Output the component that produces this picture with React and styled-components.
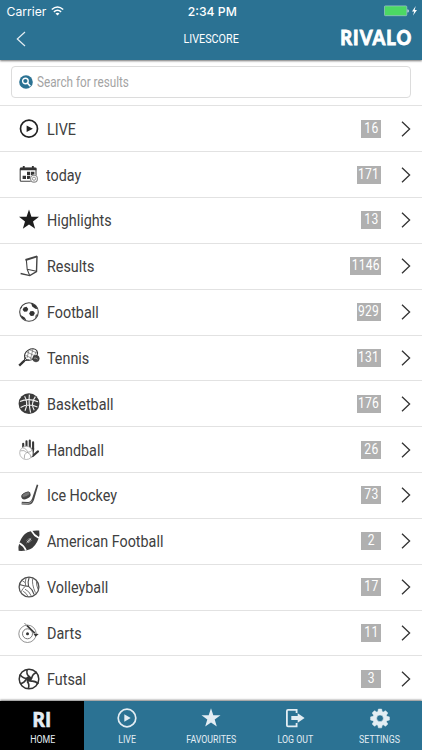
import styled, { createGlobalStyle } from "styled-components";

const GlobalStyle = createGlobalStyle`
    * {
        box-sizing: border-box;
    }
    body {
        margin: 0;
        background: #fff;
        overflow: hidden;
        font-family: "Roboto", sans-serif;
        color: #404040;
    }
`;

const categories = [
    { name: "LIVE", count: 16, icon: "live" },
    { name: "today", count: 171, icon: "today" },
    { name: "Highlights", count: 13, icon: "highlights" },
    { name: "Results", count: 1146, icon: "results" },
    { name: "Football", count: 929, icon: "football" },
    { name: "Tennis", count: 131, icon: "tennis" },
    { name: "Basketball", count: 176, icon: "basketball" },
    { name: "Handball", count: 26, icon: "handball" },
    { name: "Ice Hockey", count: 73, icon: "hockey" },
    { name: "American Football", count: 2, icon: "american" },
    { name: "Volleyball", count: 17, icon: "volleyball" },
    { name: "Darts", count: 11, icon: "darts" },
    { name: "Futsal", count: 3, icon: "futsal" },
];

const STAR = "M12 1.6l2.45 7.15 7.55.1-6 4.6 2.15 7.3L12 16.4l-6.15 4.35L8 13.45 2 8.85l7.55-.1z";

const icons = {
    live: (
        <>
            <circle cx="12" cy="11.7" r="8.5" fill="none" stroke="#222" strokeWidth="1.7" />
            <path d="M9.6 8.4v6.6l6.3-3.3z" fill="#222" />
        </>
    ),
    today: (
        <>
            <rect x="3.2" y="5" width="15.8" height="13.3" rx="1" fill="none" stroke="#444" strokeWidth="1.1" />
            <path d="M3 4.8h16.4v2.4H3zM5.8 3h1.9v3H5.8zM14.9 3h1.9v3h-1.9zM10 8.7h3.2v3.2H10zM14 8.7h3.4v3.2H14zM5.6 12.8h3.4V16H5.6zM10 12.8h3.2V16H10z" fill="#333" />
            <circle cx="17" cy="15.7" r="4.3" fill="#fff" />
            <circle cx="17" cy="15.7" r="3.4" fill="none" stroke="#888" strokeWidth="1.1" />
            <circle cx="17" cy="15.7" r="1.6" fill="none" stroke="#888" strokeWidth=".9" />
        </>
    ),
    highlights: <path d={STAR} fill="#1d1d1d" />,
    results: (
        <g fill="none" stroke="#444">
            <path d="M8.5 6L20.2 2.4" strokeWidth="2" />
            <path d="M20 2.2l-.5 15.4-6.7 4-9.2-2.1" strokeWidth="1.4" />
            <path d="M9.3 5.5l.9 9.8 2.5 6.3M10.2 15.2l9.3 2" strokeWidth="1.1" />
        </g>
    ),
    football: (
        <>
            <circle cx="12" cy="12" r="9.3" fill="none" stroke="#444" strokeWidth="1.1" />
            <path d="M6.8 7.4l2.7-.6 1.8 2.2-1.2 2.5-2.8.2-1.7-2zM13.3 11.2l2.9-.3 1.7 2.2-1.3 2.7-2.8.3-1.7-2.3z" fill="#333" />
            <path d="M14 3l4.8 2.4 1.6 3.5-2-.1-3.2-2.4zM4 15.2l3.7 2.2 1.8 3.2-4.5-2.4zM18.8 14.9l1.7-.8-2.5 4.6zM3.4 8.8L5 6.2l-.2 1.9z" fill="#333" />
        </>
    ),
    tennis: (
        <g fill="none" stroke="#333">
            <ellipse cx="14" cy="8.5" rx="7" ry="5.2" transform="rotate(-32 14 8.5)" strokeWidth="1" />
            <path d="M8 9l8 4M10 6l8 4M13 4l7 3M12 4l-2 8M16 3l-2.5 10M19.5 5L16 13" stroke="#555" strokeWidth=".6" />
            <path d="M2.2 19.6l5.2-5" strokeWidth="2.3" />
            <path d="M7.2 14.8l1.1-4M7.2 14.8l5-.9" strokeWidth="1" />
            <circle cx="19" cy="12.6" r="3.3" fill="#444" strokeWidth=".5" />
            <path d="M16.9 12.2q2.1-.8 3.8 1" stroke="#bbb" strokeWidth=".7" />
        </g>
    ),
    basketball: (
        <>
            <circle cx="12" cy="11.7" r="10.4" fill="#3b3b3b" />
            <path d="M3 9.6Q11 5.4 21 9.8M3.6 15.4q8.1-4.6 16.8-.4M7.6 4.2q4 6.3.4 14.6M12.4 2.6q-1 8 1.2 18M18.4 4.6q-5.1 7-1.2 13.6" fill="none" stroke="#f2f2f2" strokeWidth="1.15" />
        </>
    ),
    handball: (
        <>
            <path d="M6.2 10V5.7M9.5 9V3.3M12.8 10V2.5M16.1 12V4.4M15.8 18l5.2-4.6" stroke="#383838" strokeWidth="2.1" strokeLinecap="round" />
            <path d="M10.5 9.5l6.6.5-.3 6.4-2 3.5z" fill="#383838" />
            <circle cx="9.3" cy="14.9" r="6.6" fill="#fff" stroke="#aaa" strokeWidth=".8" />
            <path d="M3.4 12.8q4-1.3 6.3 1.8M5.2 9.8q4.5.2 5.5 5M9.7 14.6q-3 1.5-2.4 6M9.7 14.6q4-.4 6-2.8M10.7 14.7q3.5 1.3 3.1 4.7" fill="none" stroke="#999" strokeWidth=".75" />
        </>
    ),
    hockey: (
        <>
            <path d="M19.8 1.4l1.5.5-4.1 14.3q-1.4 5-5.3 5.5l-7.3-.2.2-2.7 6.4.2q2.8-.2 4-3.7z" fill="#484848" />
            <path d="M5 20.3l6 .2q2.8-.1 4-3" fill="none" stroke="#aaa" strokeWidth=".8" />
            <ellipse cx="9" cy="12.8" rx="4.9" ry="3" transform="rotate(-25 9 12.8)" fill="#444" />
            <ellipse cx="8.9" cy="11.6" rx="4.4" ry="2" transform="rotate(-25 8.9 11.6)" fill="#777" stroke="#444" strokeWidth=".7" />
        </>
    ),
    american: (
        <>
            <path d="M1.6 21.8q-.6-4 .7-7.7Q5 6 10.5 3.2 15 1 22.2 1.5q.8 4.2-.6 8Q18.6 17.6 13 20.3q-4.3 2-11.4 1.5z" fill="#3b3b3b" />
            <path d="M2.2 14q4.7 2.5 6.8 7.5M14.5 1.8q2.5 4.7 7.4 7.3" fill="none" stroke="#fff" strokeWidth="1.7" />
            <path d="M9.6 13.8l4.6-4.4M9.9 11.6l2 2.1M11 10.5l2 2.2M12.1 9.4l2 2.2" stroke="#e8e8e8" strokeWidth=".9" />
        </>
    ),
    volleyball: (
        <g fill="none" stroke="#666" strokeWidth=".9">
            <circle cx="12" cy="12" r="9.9" stroke="#505050" strokeWidth="1.3" />
            <path d="M11.6 11.4q-1.2-4.6.6-9.2M11.6 11.4q-4.8-.4-9-1.9M11.6 11.4q4 3 5.4 8" stroke="#505050" strokeWidth="1.1" />
            <path d="M8.6 10.9q-.8-3.5.4-8M5.2 5.6l3.2 2.2M15.8 3.2q-1.4 5.3 2.6 14.5M19.4 6.2q-.2 3.5 1.6 8M8.5 11.3q-3 1.8-4.3 5.5M8 14.2q4.2 1.8 6.3 6.8M6.2 16.3q3.2 1.6 4.8 5.2" />
        </g>
    ),
    darts: (
        <g fill="none" stroke="#777">
            <circle cx="10.5" cy="12.8" r="8.7" strokeWidth=".8" />
            <circle cx="10.5" cy="12.8" r="5" strokeWidth="1" />
            <circle cx="10.5" cy="12.8" r="1.5" fill="#333" stroke="none" />
            <path d="M7.4 2l4 4" strokeWidth=".9" />
            <path d="M10 4.7l7.7 7.3" stroke="#333" strokeWidth="1.6" />
            <path d="M16.3 12.5l5.4.5-3.2 2.8z" fill="#333" stroke="none" />
        </g>
    ),
    futsal: (
        <>
            <circle cx="12" cy="12" r="9.8" fill="none" stroke="#333" strokeWidth="1.5" />
            <path d="M12 8.6l3.3 2.3-1.2 3.9H9.9l-1.2-3.9z" fill="#333" />
            <path d="M12 9.4Q9 7 10.2 2.2M14.6 11.3q.8-4.5 5.4-6.1M13.6 14.3q4.8-.8 7.7 2.8M10.2 14.4q2.7 3 1 7.4M9.3 11.3q-1.1 4.5-6.1 5.5M9.2 11.5Q5 11 3 7.4" fill="none" stroke="#333" strokeWidth="1.6" />
        </>
    ),
};

const tabs = [
    { label: "HOME", active: true },
    { label: "LIVE", icon: <><circle cx="12" cy="12" r="8.8" fill="none" stroke="currentColor" strokeWidth="1.7" /><path d="M9.3 8.3v7.4l6.4-3.7z" /></> },
    { label: "FAVOURITES", icon: <path d="M12 2.3l2.3 6.9 7.2.1-5.8 4.3 2.1 7-5.8-4.2-5.8 4.2 2.1-7-5.8-4.3 7.2-.1z" /> },
    { label: "LOG OUT", icon: <><path d="M13.6 7V3.9H5q-1.1 0-1.1 1.1v14.2q0 1.1 1.1 1.1h8.6V17" fill="none" stroke="currentColor" strokeWidth="1.8" /><path d="M8.3 10h6.4V7.3l6.9 4.7-6.9 4.7V14H8.3z" /></> },
    { label: "SETTINGS", small: true, icon: <path fillRule="evenodd" stroke="currentColor" strokeWidth=".6" strokeLinejoin="round" d="M10.3 2.7h3.4l.6 2.7 1.2.5 2.4-1.5 2.4 2.4-1.5 2.4.5 1.2 2.7.6v3.4l-2.7.6-.5 1.2 1.5 2.4-2.4 2.4-2.4-1.5-1.2.5-.6 2.7h-3.4l-.6-2.7-1.2-.5-2.4 1.5-2.4-2.4 1.5-2.4-.5-1.2-2.7-.6v-3.4l2.7-.6.5-1.2-1.5-2.4 2.4-2.4 2.4 1.5 1.2-.5zM12 8.9a3.6 3.6 0 100 7.2 3.6 3.6 0 000-7.2z" /> },
];

const App = () => {
    return (
        <Page>
            <GlobalStyle />
            <Header>
                <StatusBar>
                    <Carrier>
                        Carrier
                        <svg width="13" height="10" viewBox="0 0 13 10" fill="none" stroke="#fff" strokeWidth="1.6">
                            <path d="M.8 3.5q5.7-5 11.4 0M2.9 5.8q3.6-3.1 7.2 0" />
                            <path d="M4.5 7.4q2-1.5 4 0l-2 2.1z" fill="#fff" stroke="none" />
                        </svg>
                    </Carrier>
                    <Clock>2:34 PM</Clock>
                    <Power>
                        <svg width="34" height="12" viewBox="0 0 34 12">
                            <rect x=".4" y=".9" width="22.4" height="9.8" rx="1" fill="#4cd964" stroke="#a5c7cf" strokeWidth=".7" />
                            <path d="M23.3 4.2q1.7.2 1.7 1.7t-1.7 1.7z" fill="#bad3dd" />
                            <path d="M31.7 1L28 6.4h2.2L29 10.5l4-5.5h-2.3z" fill="#fff" />
                        </svg>
                    </Power>
                </StatusBar>
                <NavBar>
                    <BackButton aria-label="Back">
                        <svg width="10" height="16" viewBox="0 0 10 16" fill="none" stroke="#e4edf2" strokeWidth="1.2">
                            <path d="M9 1L1.3 8 9 15" />
                        </svg>
                    </BackButton>
                    <Title $scale={0.81}>LIVESCORE</Title>
                    <Logo>RIVALO</Logo>
                </NavBar>
            </Header>
            <SearchArea>
                <SearchBox>
                    <svg width="14" height="14" viewBox="0 0 14 14">
                        <circle cx="7" cy="7" r="6.8" fill="#2b7293" />
                        <circle cx="6.4" cy="6" r="2.8" fill="none" stroke="#fff" strokeWidth="1.4" />
                        <path d="M8.3 8l3.1 3.2" stroke="#fff" strokeWidth="1.6" />
                    </svg>
                    <Placeholder $scale={0.85}>Search for results</Placeholder>
                </SearchBox>
            </SearchArea>
            <List>
                {categories.map((item) => (
                    <Row key={item.name}>
                        <RowIcon viewBox="0 0 24 24">{icons[item.icon]}</RowIcon>
                        <RowLabel $scale={0.825} $shift={item.name === "today"}>{item.name}</RowLabel>
                        <Badge $digits={String(item.count).length}>
                            <Count $scale={0.84}>{item.count}</Count>
                        </Badge>
                        <Chevron viewBox="0 0 10 16">
                            <path d="M1 .8L8.6 8 1 15.2" />
                        </Chevron>
                    </Row>
                ))}
            </List>
            <TabBar>
                {tabs.map((tab) => (
                    <Tab key={tab.label} $active={tab.active}>
                        {tab.icon ? <TabIcon viewBox={tab.small ? "-0.8 -0.6 25.6 25.6" : "0 0 24 24"}>{tab.icon}</TabIcon> : <TabLogo>RI</TabLogo>}
                        <TabLabel $scale={0.8}>{tab.label}</TabLabel>
                    </Tab>
                ))}
            </TabBar>
        </Page>
    );
};

const Page = styled.div`
    width: 422px;
    height: 750px;
    display: flex;
    flex-direction: column;
    overflow: hidden;
`;

const Header = styled.header`
    height: 60px;
    flex-shrink: 0;
    background: #2b7293;
    color: #fff;
    box-shadow: 0 1px 2px rgba(0, 0, 0, 0.55);
`;

const StatusBar = styled.div`
    height: 22px;
    display: grid;
    grid-template-columns: 1fr auto 1fr;
    align-items: center;
    padding: 0 4px 0 6.5px;
    font-family: "Inter", sans-serif;
    font-size: 12.2px;
`;

const Carrier = styled.div`
    display: flex;
    align-items: center;
    gap: 4.5px;
`;

const Clock = styled.div`
    font-weight: 500;
`;

const Power = styled.div`
    display: flex;
    justify-content: flex-end;
`;

const NavBar = styled.div`
    height: 33px;
    display: grid;
    grid-template-columns: 1fr auto 1fr;
    align-items: center;
    padding: 0 10px;
`;

const BackButton = styled.button`
    display: flex;
    padding: 0 0 0 6px;
    border: none;
    background: none;
`;

/* squeezed Roboto, stands in for the condensed cut */
const Narrow = styled.span`
    display: inline-block;
    white-space: nowrap;
    transform: scaleX(${(props) => props.$scale});
`;

const Title = styled(Narrow)`
    font-size: 13.3px;
`;

const Logo = styled.div`
    justify-self: end;
    padding-bottom: 3px;
    font-family: "Lato", sans-serif;
    font-weight: 900;
    font-size: 20px;
    letter-spacing: 1.2px;
    -webkit-text-stroke: 0.8px currentColor;
    transform: scaleX(0.91);
    transform-origin: right center;
`;

const SearchArea = styled.div`
    height: 46.4px;
    flex-shrink: 0;
    padding: 6px 11px 0;
    border-bottom: 1px solid #e2e2e2;
`;

const SearchBox = styled.div`
    height: 32px;
    display: flex;
    align-items: center;
    gap: 4px;
    padding-left: 7px;
    border: 1px solid #dcdcdc;
    border-radius: 4px;
`;

const Placeholder = styled(Narrow)`
    font-size: 13.8px;
    color: #a3a3a3;
    transform-origin: left center;
`;

const List = styled.div`
    flex: 1;
    min-height: 0;
    overflow: hidden;
`;

const Row = styled.div`
    height: 45.83px;
    display: flex;
    align-items: center;
    padding: 0 11px 0 16.5px;
    border-bottom: 1px solid #e2e2e2;
`;

const RowIcon = styled.svg`
    width: 24px;
    height: 24px;
    flex-shrink: 0;
`;

const RowLabel = styled(Narrow)`
    flex: 1;
    margin-left: ${(props) => (props.$shift ? "5px" : "6px")};
    font-size: 17.4px;
    transform-origin: left center;
`;

const Badge = styled.div`
    width: ${(props) => ({ 3: 24, 4: 31 }[props.$digits] || 20)}px;
    height: 18px;
    display: flex;
    align-items: center;
    justify-content: center;
    padding-bottom: 1px;
    background: #b0b0b0;
    color: #fff;
`;

const Count = styled(Narrow)`
    font-size: 14.4px;
    letter-spacing: 0.3px;
`;

const Chevron = styled.svg`
    width: 10px;
    height: 16px;
    margin-left: 20px;
    fill: none;
    stroke: #333;
    stroke-width: 1.3;
`;

const TabBar = styled.nav`
    height: 49px;
    flex-shrink: 0;
    display: grid;
    grid-template-columns: repeat(5, 1fr);
    background: #2b7293;
    box-shadow: 0 -1px 2px rgba(0, 0, 0, 0.5);
`;

const Tab = styled.div`
    display: flex;
    flex-direction: column;
    align-items: center;
    padding-top: 5px;
    background: ${(props) => (props.$active ? "#000" : "transparent")};
    color: #e3edf3;
`;

const TabIcon = styled.svg`
    width: 24px;
    height: 24px;
    fill: currentColor;
`;

const TabLogo = styled.div`
    height: 24px;
    line-height: 27px;
    font-family: "Lato", sans-serif;
    font-weight: 900;
    font-size: 20px;
    letter-spacing: 0.5px;
    -webkit-text-stroke: 0.6px currentColor;
    transform: scaleX(0.95);
`;

const TabLabel = styled(Narrow)`
    margin-top: 4px;
    font-size: 11px;
    line-height: 12px;
`;

export default App;
